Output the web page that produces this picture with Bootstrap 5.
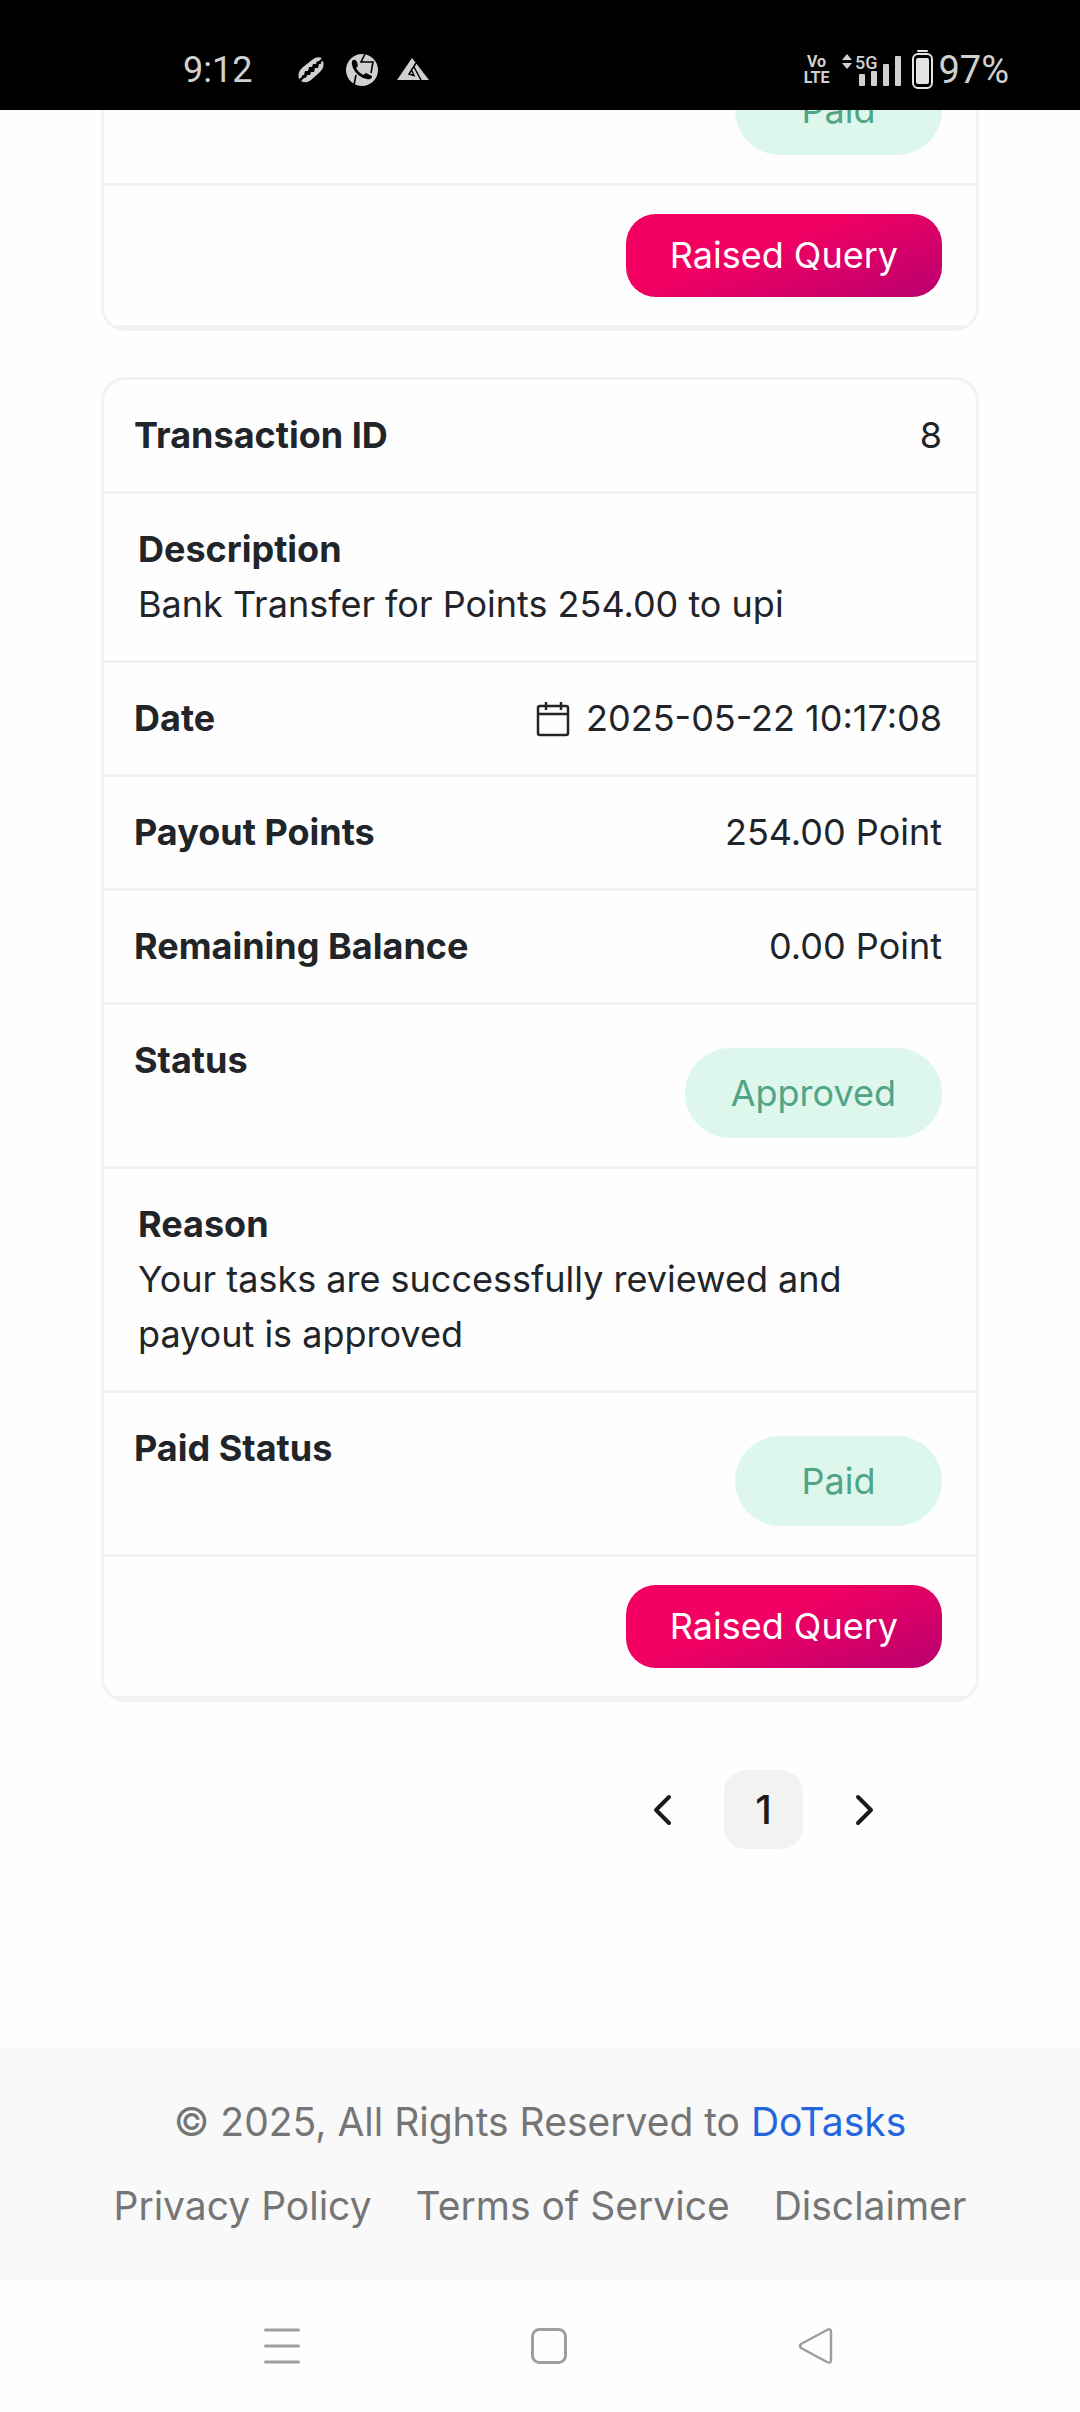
<!DOCTYPE html>
<html lang="en">
<head>
<meta charset="utf-8">
<meta name="viewport" content="width=device-width, initial-scale=1">
<title>DoTasks – Transactions</title>
<link href="https://cdn.jsdelivr.net/npm/bootstrap@5.3.0/dist/css/bootstrap.min.css" rel="stylesheet">
<style>
  :root { --line: #f2f2f2; --ink: #212529; }
  body { font-family: Inter, "Noto Sans", sans-serif; font-size: 36px; line-height: 55px; color: var(--ink); background: #fefefe; }
  svg { display: block; flex: none; }

  .phone-bar { height: 110px; padding: 30px 71px 0 183px; background: #000; color: #d0d0d0; font-family: Roboto, sans-serif; font-size: 38px; line-height: 44px; }
  .phone-time { font-size: 36px; }
  .phone-apps { gap: 17px; margin-left: 42px; }
  .net-tag { font-weight: 700; font-size: 16px; line-height: 16px; margin-right: 12px; }
  .net-gen { font-weight: 500; font-size: 18px; fill: #d0d0d0; }

  .page-body { padding: 19px 101px 199px; }
  .txn { border: 3px solid var(--line); border-radius: 24px; background: #fefefe; margin-bottom: 46px; overflow: hidden; }
  .txn-row { border-bottom: 3px solid var(--line); padding: 28px 34px 28px 30px; }
  .txn-block { padding-left: 34px; }
  .pill { margin-top: 15px; min-width: 207px; padding: 0 46px; line-height: 90px; border-radius: 45px; background: #def7ec; color: #4fa585; text-align: center; }
  .btn-query { padding: 0 44px; border: 0; border-radius: 30px; font-size: 36px; line-height: 83px; color: #fff; background: linear-gradient(160deg, #f20062 40%, #b8006f 100%); }
  .btn-query:hover { color: #fff; }

  .pager { gap: 22px; margin-top: 68px; padding-right: 76px; }
  .pager .page-link { width: 79px; height: 79px; padding: 0; border: 0; border-radius: 22px; font-size: 40px; font-weight: 500; color: #1b1b1b; background: transparent; }
  .pager .active .page-link { background: #f2f2f2; }

  .site-foot { background: #f9f9f9; color: #757575; font-size: 39px; line-height: 60px; padding: 44px 40px; }
  .foot-links { gap: 24px 44px; }
  .foot-links a { color: inherit; }
  .brand-link { color: #2366dd; }
  .phone-nav { height: 132px; background: #fefefe; padding: 0 246px 0 264px; }
</style>
</head>
<body>
<header class="phone-bar fixed-top d-flex align-items-center">
  <span class="phone-time">9:12</span>
  <div class="phone-apps d-flex align-items-center">
    <svg width="34" height="34" viewBox="0 0 34 34" fill="#d0d0d0" aria-hidden="true">
      <path d="M5 26Q3 19 9 14L18 7Q22 3 28 5L25 8Q22 8 22 11L19 11L18 14L15 14L14 18L11 18L10 22Q7 22 8 24Z"/>
      <path d="M29 8Q31 14 26 19L17 27Q12 31 7 28L10 25Q13 25 13 22L16 22L17 19L20 19L21 15L24 15L25 11Q28 11 27 9Z"/>
    </svg>
    <svg width="34" height="34" viewBox="0 0 34 34" aria-hidden="true">
      <circle cx="17" cy="17" r="16" fill="#d0d0d0"/>
      <path d="M20 1L16 9H28L26 20" fill="none" stroke="#000" stroke-width="1.6"/>
      <path d="M11 22L9 32" stroke="#000" stroke-width="1.6"/>
      <path d="M7 8Q10 5 12 9L13 13L11 15Q13 19 18 22L21 20L27 23Q27 27 22 26Q12 24 8 15Q6 11 7 8Z" fill="#000"/>
    </svg>
    <svg width="34" height="34" viewBox="0 0 34 34" aria-hidden="true">
      <path d="M16 5L33 27H1Z" fill="#d0d0d0"/>
      <path d="M20 10L13 21L18 22.500L16 18M18 14L25 27" fill="none" stroke="#000" stroke-width="1.500"/>
    </svg>
  </div>
  <div class="ms-auto d-flex align-items-center">
    <div class="net-tag text-center">Vo<br>LTE</div>
    <svg width="62" height="38" viewBox="0 0 62 38" fill="#d0d0d0" role="img" aria-label="5G signal">
      <path d="M6 3L11 9H1ZM6 18L1 12H11Z"/>
      <text class="net-gen" x="14" y="18">5G</text>
      <rect x="18" y="23" width="6" height="12" rx="1"/><rect x="30" y="20" width="6" height="15" rx="1"/>
      <rect x="42" y="13" width="6" height="22" rx="1"/><rect x="54" y="5" width="6" height="30" rx="1"/>
    </svg>
    <svg class="ms-2 me-1" width="23" height="40" viewBox="0 0 23 40" role="img" aria-label="Battery">
      <rect x="6" y="0" width="11" height="2" rx="1" fill="#e4e4e4"/>
      <rect x="2" y="4" width="19" height="34" rx="5" fill="none" stroke="#e4e4e4" stroke-width="2"/>
      <rect x="5" y="8" width="13" height="26" rx="2" fill="#e4e4e4"/>
    </svg>
    <span>97%</span>
  </div>
</header>

<main class="page-body">
  <section class="txn">
    <div class="txn-row d-flex justify-content-end"><span class="pill">Paid</span></div>
    <div class="txn-row d-flex justify-content-end"><button type="button" class="btn btn-query">Raised Query</button></div>
  </section>

  <section class="txn">
    <div class="txn-row d-flex justify-content-between"><span class="fw-bold">Transaction ID</span><span>8</span></div>
    <div class="txn-row txn-block"><div class="fw-bold">Description</div><div>Bank Transfer for Points 254.00 to upi</div></div>
    <div class="txn-row d-flex justify-content-between">
      <span class="fw-bold">Date</span>
      <span class="d-flex align-items-center">
        <svg class="me-3" width="34" height="36" viewBox="0 0 34 36" fill="none" stroke="#212529" stroke-width="2.500" aria-hidden="true">
          <rect x="2" y="5" width="30" height="29" rx="2"/><path d="M2 13H32M10 1V9M25 1V9"/>
        </svg>
        <span>2025-05-22 10:17:08</span>
      </span>
    </div>
    <div class="txn-row d-flex justify-content-between"><span class="fw-bold">Payout Points</span><span>254.00 Point</span></div>
    <div class="txn-row d-flex justify-content-between"><span class="fw-bold">Remaining Balance</span><span>0.00 Point</span></div>
    <div class="txn-row d-flex justify-content-between"><span class="fw-bold">Status</span><span class="pill">Approved</span></div>
    <div class="txn-row txn-block"><div class="fw-bold">Reason</div><div>Your tasks are successfully reviewed and payout is approved</div></div>
    <div class="txn-row d-flex justify-content-between"><span class="fw-bold">Paid Status</span><span class="pill">Paid</span></div>
    <div class="txn-row d-flex justify-content-end"><button type="button" class="btn btn-query">Raised Query</button></div>
  </section>

  <nav aria-label="Transaction pages">
    <ul class="pager pagination justify-content-end mb-0">
      <li class="page-item"><a class="page-link d-flex align-items-center justify-content-center" href="#" aria-label="Previous">
        <svg width="22" height="34" viewBox="0 0 22 34" fill="none" stroke="#1b1b1b" stroke-width="4" stroke-linecap="round" stroke-linejoin="round"><path d="M16 4L3 17L16 30"/></svg></a></li>
      <li class="page-item active"><a class="page-link d-flex align-items-center justify-content-center" href="#" aria-current="page">1</a></li>
      <li class="page-item"><a class="page-link d-flex align-items-center justify-content-center" href="#" aria-label="Next">
        <svg width="22" height="34" viewBox="0 0 22 34" fill="none" stroke="#1b1b1b" stroke-width="4" stroke-linecap="round" stroke-linejoin="round"><path d="M5 4L18 17L5 30"/></svg></a></li>
    </ul>
  </nav>
</main>

<footer class="site-foot text-center">
  <div>© 2025, All Rights Reserved to <a class="brand-link text-decoration-none" href="#">DoTasks</a></div>
  <div class="foot-links d-flex flex-wrap justify-content-center mt-4">
    <a class="text-decoration-none" href="#">Privacy Policy</a>
    <a class="text-decoration-none" href="#">Terms of Service</a>
    <a class="text-decoration-none" href="#">Disclaimer</a>
  </div>
</footer>

<div class="phone-nav d-flex align-items-center justify-content-between">
  <button type="button" class="btn p-0 border-0" aria-label="Recent apps">
    <svg width="36" height="38" viewBox="0 0 36 38" stroke="#9e9e9e" stroke-width="3" stroke-linecap="round"><path d="M1.500 3H34.500M1.500 19H34.500M1.500 35H34.500"/></svg></button>
  <button type="button" class="btn p-0 border-0" aria-label="Home">
    <svg width="36" height="38" viewBox="0 0 36 38" fill="none" stroke="#9e9e9e" stroke-width="3"><rect x="1.500" y="2.500" width="33" height="33" rx="7"/></svg></button>
  <button type="button" class="btn p-0 border-0" aria-label="Back">
    <svg width="36" height="38" viewBox="0 0 36 38" fill="none" stroke="#9e9e9e" stroke-width="2.500" stroke-linejoin="round"><path d="M33 5Q33 1 29 3L3 17Q1 19 3 21L29 35Q33 37 33 33Z"/></svg></button>
</div>
<script src="https://cdn.jsdelivr.net/npm/bootstrap@5.3.0/dist/js/bootstrap.bundle.min.js"></script>
</body>
</html>
